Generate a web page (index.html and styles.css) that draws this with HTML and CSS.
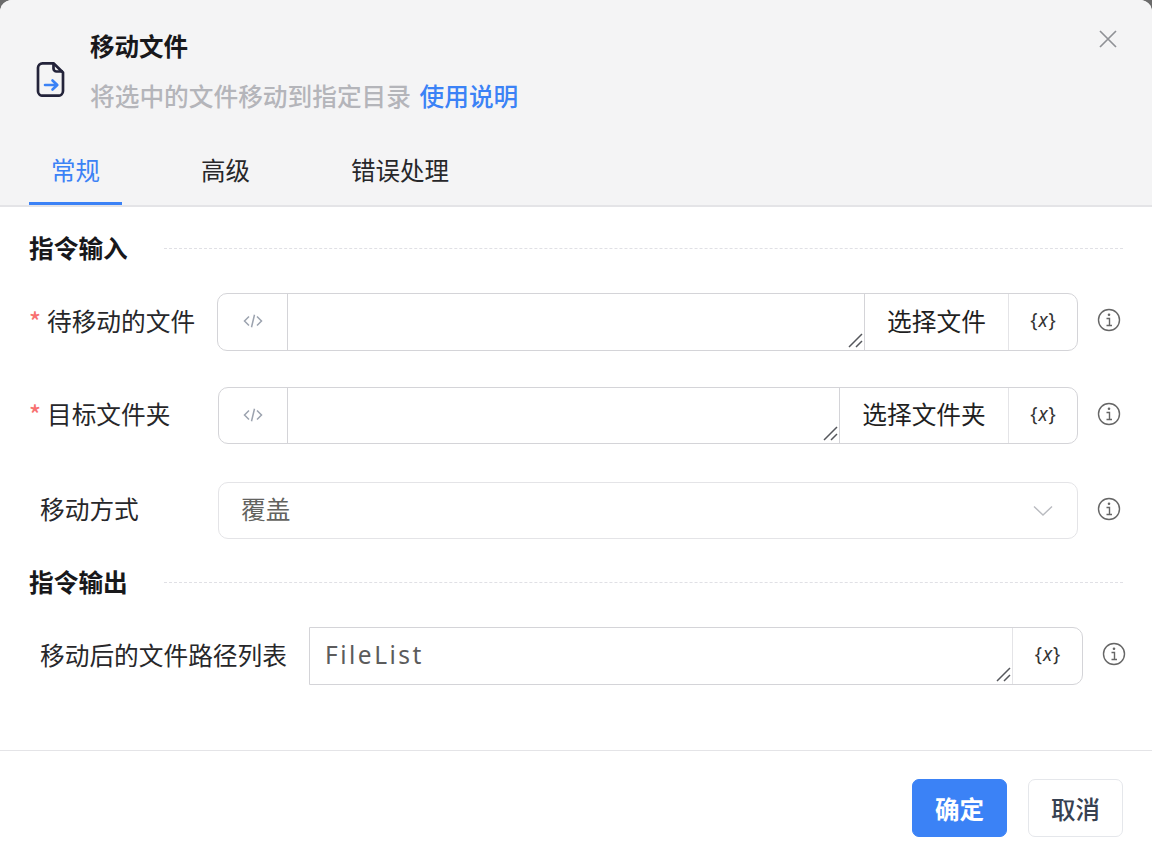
FILE: index.html
```html
<!DOCTYPE html>
<html lang="zh-CN">
<head>
<meta charset="utf-8">
<title>移动文件</title>
<link rel="stylesheet" href="styles.css">
</head>
<body>
<div class="dialog">
  <header class="head">
    <div class="head-top">
      <svg class="file-icon" width="30" height="36" viewBox="0 0 30 36" fill="none">
        <path d="M6.500 2.300H17.500L27 11.500V30a4.700 4.700 0 0 1-4.700 4.700H6.500A4.500 4.500 0 0 1 2 30.200V6.800A4.500 4.500 0 0 1 6.500 2.300Z" stroke="#23233a" stroke-width="2.700" stroke-linejoin="round"/>
        <path d="M17.500 2.300V7.500a3 3 0 0 0 3 3H27" stroke="#23233a" stroke-width="2.700"/>
        <path d="M9 24h12M16.500 19.500l4.800 4.500-4.800 4.500" stroke="#3b82f6" stroke-width="2.600" stroke-linecap="round" stroke-linejoin="round"/>
      </svg>
      <div class="head-text">
        <h1 class="title">移动文件</h1>
        <p class="desc">将选中的文件移动到指定目录 <a class="help">使用说明</a></p>
      </div>
      <svg class="close" width="20" height="20" viewBox="0 0 20 20" fill="none"><path d="M2 2l16 16M18 2 2 18" stroke="#8f9196" stroke-width="1.700"/></svg>
    </div>
    <nav class="tabs">
      <a class="tab active">常规</a>
      <a class="tab">高级</a>
      <a class="tab">错误处理</a>
    </nav>
  </header>

  <main class="body">
    <div class="section"><h2 class="section-title">指令输入</h2><span class="section-line"></span></div>

    <div class="row row-file">
      <label class="label"><span class="star">*</span>待移动的文件</label>
      <div class="field">
        <span class="cell code"><svg width="20" height="14" viewBox="0 0 20 14" fill="none"><path d="M6 2.500 1.500 7 6 11.500M14 2.500 18.500 7 14 11.500M11.500 .8 8.500 13.200" stroke="#9ca3af" stroke-width="1.500"/></svg></span>
        <span class="area"><svg class="grip" width="16" height="16" viewBox="0 0 16 16" fill="none"><path d="M1 14 14 1M8 14l6-6" stroke="#55575c" stroke-width="1.500"/></svg></span>
        <span class="cell pick pick-4">选择文件</span>
        <span class="cell var">{<i>x</i>}</span>
      </div>
      <svg class="info" width="24" height="24" viewBox="0 0 24 24" fill="none"><circle cx="12" cy="12" r="10.500" stroke="#666" stroke-width="1.400"/><path d="M9.500 10.500H12.500V17M9.500 17.500H15" stroke="#666" stroke-width="1.400"/><circle cx="12" cy="6.800" r="1.300" fill="#666"/></svg>
    </div>

    <div class="row row-folder">
      <label class="label"><span class="star">*</span>目标文件夹</label>
      <div class="field">
        <span class="cell code"><svg width="20" height="14" viewBox="0 0 20 14" fill="none"><path d="M6 2.500 1.500 7 6 11.500M14 2.500 18.500 7 14 11.500M11.500 .8 8.500 13.200" stroke="#9ca3af" stroke-width="1.500"/></svg></span>
        <span class="area"><svg class="grip" width="16" height="16" viewBox="0 0 16 16" fill="none"><path d="M1 14 14 1M8 14l6-6" stroke="#55575c" stroke-width="1.500"/></svg></span>
        <span class="cell pick pick-5">选择文件夹</span>
        <span class="cell var">{<i>x</i>}</span>
      </div>
      <svg class="info" width="24" height="24" viewBox="0 0 24 24" fill="none"><circle cx="12" cy="12" r="10.500" stroke="#666" stroke-width="1.400"/><path d="M9.500 10.500H12.500V17M9.500 17.500H15" stroke="#666" stroke-width="1.400"/><circle cx="12" cy="6.800" r="1.300" fill="#666"/></svg>
    </div>

    <div class="row row-mode">
      <label class="label plain">移动方式</label>
      <div class="select">
        <span class="select-value">覆盖</span>
        <svg width="20" height="12" viewBox="0 0 20 12" fill="none"><path d="M1 1.500 10 10l9-8.500" stroke="#b9bbc0" stroke-width="1.400"/></svg>
      </div>
      <svg class="info" width="24" height="24" viewBox="0 0 24 24" fill="none"><circle cx="12" cy="12" r="10.500" stroke="#666" stroke-width="1.400"/><path d="M9.500 10.500H12.500V17M9.500 17.500H15" stroke="#666" stroke-width="1.400"/><circle cx="12" cy="6.800" r="1.300" fill="#666"/></svg>
    </div>

    <div class="section section-out"><h2 class="section-title">指令输出</h2><span class="section-line"></span></div>

    <div class="row row-output">
      <label class="label plain">移动后的文件路径列表</label>
      <div class="field square">
        <span class="area value">FileList<svg class="grip" width="16" height="16" viewBox="0 0 16 16" fill="none"><path d="M1 14 14 1M8 14l6-6" stroke="#55575c" stroke-width="1.500"/></svg></span>
        <span class="cell var">{<i>x</i>}</span>
      </div>
      <svg class="info" width="24" height="24" viewBox="0 0 24 24" fill="none"><circle cx="12" cy="12" r="10.500" stroke="#666" stroke-width="1.400"/><path d="M9.500 10.500H12.500V17M9.500 17.500H15" stroke="#666" stroke-width="1.400"/><circle cx="12" cy="6.800" r="1.300" fill="#666"/></svg>
    </div>
  </main>

  <footer class="foot">
    <button class="btn primary">确定</button>
    <button class="btn">取消</button>
  </footer>
</div>
</body>
</html>
```
FILE: styles.css
```css
* { box-sizing: border-box; }
html, body { margin: 0; height: 100%; }
body {
  background: #6b6b6b;
  font-family: "Noto Sans CJK SC", "Noto Sans", sans-serif;
  font-size: 24.7px;
  color: #1f1f1f;
  overflow: hidden;
}
.dialog {
  width: 1152px;
  height: 866px;
  background: #fff;
  border-radius: 12px 12px 0 0;
  overflow: hidden;
  display: flex;
  flex-direction: column;
}
.head {
  height: 207px;
  flex: none;
  background: #f4f4f5;
  border-bottom: 2px solid #e4e4e7;
  display: flex;
  flex-direction: column;
}
.head-top {
  display: flex;
  align-items: flex-start;
  padding: 0 34px 0 36px;
  height: 135px;
}
.file-icon { margin-top: 61px; flex: none; }
.head-text { margin-left: 24px; flex: 1; padding-top: 28px; }
.title { margin: 0; font-size: 24.5px; line-height: 36px; font-weight: 700; color: #18181b; }
.desc { margin: 13px 0 0; line-height: 36px; color: #b4b5ba; font-weight: 500; }
.help { color: #3b82f6; margin-left: 3px; }
.close { margin-top: 29px; flex: none; }
.tabs { display: flex; flex: 1; padding-left: 29px; font-size: 24.5px; }
.tab {
  height: 70px;
  padding: 12px 22px 0;
  margin-right: 57px;
  line-height: 46px;
  color: #27272a;
  font-weight: 400;
}
.tab.active { color: #3b82f6; border-bottom: 3px solid #3b82f6; }
.body { flex: 1; padding: 0 29px; }
.section { display: flex; align-items: center; height: 36px; margin-top: 23px; }
.section-title { margin: 0; width: 135px; font-size: 24.7px; line-height: 36px; padding-bottom: 2px; font-weight: 700; color: #18181b; flex: none; }
.section-line { flex: 1; border-top: 1px dashed #e0e0e5; }
.section-out { margin-top: 25px; }
.row { display: flex; align-items: center; height: 58px; }
.row-file { margin-top: 27px; }
.row-folder { margin-top: 36px; height: 57px; }
.row-mode { margin-top: 38px; height: 57px; }
.row-output { margin-top: 27px; }
.label { flex: none; white-space: nowrap; font-weight: 400; color: #27272a; padding-bottom: 5px; }
.star { color: #f87171; margin-right: 6px; font-weight: 500; }
.plain { padding-left: 11px; }
.row-file .label { width: 188px; }
.row-folder .label, .row-mode .label { width: 189px; }
.row-output .label { width: 280px; }
.field {
  flex: none;
  height: 100%;
  display: flex;
  border: 1px solid #d4d4d8;
  border-radius: 10px;
  overflow: hidden;
  background: #fff;
}
.row-file .field { width: 861px; }
.row-folder .field { width: 860px; }
.row-output .field { width: 774px; }
.field.square { border-radius: 0 10px 10px 0; }
.cell { flex: none; display: flex; align-items: center; justify-content: center; border-left: 1px solid #e4e4e7; }
.cell:first-child { border-left: 0; }
.code { width: 69px; padding-bottom: 2px; }
.row-folder .code { width: 68px; }
.area { flex: 1; position: relative; border-left: 1px solid #d4d4d8; }
.area.value { border-left: 0; padding: 6px 0 0 15px; font-family: "Noto Sans", sans-serif; font-size: 24.500px; line-height: 42px; letter-spacing: 2.500px; color: #5c5c5c; }
.grip { position: absolute; right: 0; bottom: 1px; }
.pick { border-left: 1px solid #d4d4d8; padding-bottom: 5px; }
.pick-4 { width: 144px; }
.pick-5 { width: 169px; }
.var { width: 69px; font-size: 19px; font-family: "Noto Sans", sans-serif; color: #333; padding-bottom: 4px; }
.row-output .var { width: 70px; }
.var i { padding: 0 1px; }
.info { flex: none; margin-left: 19px; margin-bottom: 4px; }
.select {
  flex: none;
  width: 860px;
  height: 100%;
  border: 1px solid #e4e4e7;
  border-radius: 10px;
  display: flex;
  align-items: center;
  justify-content: space-between;
  padding: 0 24px 0 22px;
}
.select-value { color: #63635f; padding-bottom: 5px; }
.foot {
  height: 116px;
  flex: none;
  border-top: 1px solid #e4e4e7;
  display: flex;
  justify-content: flex-end;
  gap: 21px;
  padding: 28px 29px 0 0;
}
.btn {
  width: 95px;
  height: 58px;
  border: 1px solid #e5e7eb;
  border-radius: 7px;
  background: #fff;
  color: #374151;
  font: 500 24.5px "Noto Sans CJK SC", "Noto Sans", sans-serif;
  padding: 0;
}
.btn.primary { background: #3b82f6; border-color: #3b82f6; color: #fff; font-weight: 700; }
```
